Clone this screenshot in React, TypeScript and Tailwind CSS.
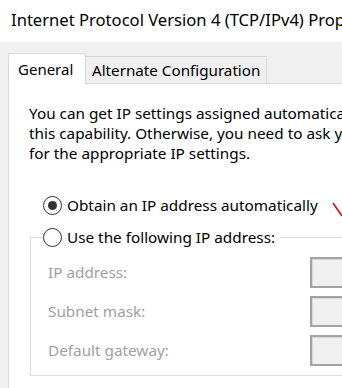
import { useState } from "react";

const FONT = { fontFamily: '"Noto Sans", "Open Sans", sans-serif' };

function Radio({ checked }: { checked: boolean }) {
  return (
    <span className="w-[19px] h-[19px] rounded-full border-[1.5px] border-[#333333] bg-white flex items-center justify-center shrink-0">
      {checked && <span className="w-[9px] h-[9px] rounded-full bg-[#333333]" />}
    </span>
  );
}

// 비활성 IP 입력칸
function IpBox() {
  return (
    <div className="w-[120px] h-[31px] border-2 border-[#a3a3a3] bg-[#f0f0f0] shadow-[inset_1px_1px_0_#d8d8d8]" />
  );
}

export default function App() {
  const [auto, setAuto] = useState(true);

  const fields = ["IP address:", "Subnet mask:", "Default gateway:"];

  return (
    <div
      className="relative w-[342px] h-[388px] overflow-hidden flex flex-col bg-[#f0f0f0] text-black"
      style={FONT}
    >
      {/* 타이틀바 */}
      <div className="h-[42px] bg-white flex items-center pl-[11px] pb-[2px] whitespace-nowrap text-[16.6px] leading-none">
        Internet Protocol Version 4 (TCP/IPv4) Properties
      </div>

      <div className="flex-1 flex flex-col pl-[8px] pt-[11px]">
        {/* 탭 */}
        <div className="flex items-end h-[31px] relative z-10 -mb-px">
          <div className="w-[78px] h-[31px] bg-white border border-b-0 border-[#d9d9d9] flex items-center pl-[9px] text-[15px] whitespace-nowrap">
            General
          </div>
          <div className="w-[181px] h-[28px] bg-[#f0f0f0] border border-l-0 border-[#d9d9d9] flex items-center pl-[6px] text-[15.2px] whitespace-nowrap">
            Alternate Configuration
          </div>
        </div>

        <div className="flex-1 w-[600px] bg-white border-l border-t border-[#d9d9d9] pl-[20px] pt-[19px]">
          <div className="text-[15.3px] leading-[20px] whitespace-nowrap">
            <div>You can get IP settings assigned automatically if your network supports</div>
            <div>this capability. Otherwise, you need to ask your network administrator</div>
            <div>for the appropriate IP settings.</div>
          </div>

          <label
            className="mt-[32px] ml-[14px] flex items-center gap-[5px] h-[20px] text-[15.3px] whitespace-nowrap cursor-default"
            onClick={() => setAuto(true)}
          >
            <Radio checked={auto} />
            Obtain an IP address automatically
          </label>

          <fieldset className="mt-[12px] ml-[1px] w-[400px] border border-[#dcdcdc]">
            <legend
              className="ml-[12px] pr-[4px] flex items-center gap-[5px] h-[20px] text-[15.3px] whitespace-nowrap cursor-default"
              onClick={() => setAuto(false)}
            >
              <Radio checked={!auto} />
              Use the following IP address:
            </legend>
            <div className="flex flex-col gap-[8px] pt-[10px] pb-[9px] pl-[17px]">
              {fields.map((f) => (
                <div key={f} className="flex items-center">
                  <span className="w-[262px] text-[15.3px] text-[#a0a0a0]">{f}</span>
                  <IpBox />
                </div>
              ))}
            </div>
          </fieldset>
        </div>
      </div>

      {/* 빨간 표시 */}
      <svg className="absolute left-[330px] top-[200px]" width="14" height="18" viewBox="0 0 14 18">
        <path d="M3 3 L12 16" stroke="#e01010" strokeWidth="1.6" fill="none" />
      </svg>
    </div>
  );
}
